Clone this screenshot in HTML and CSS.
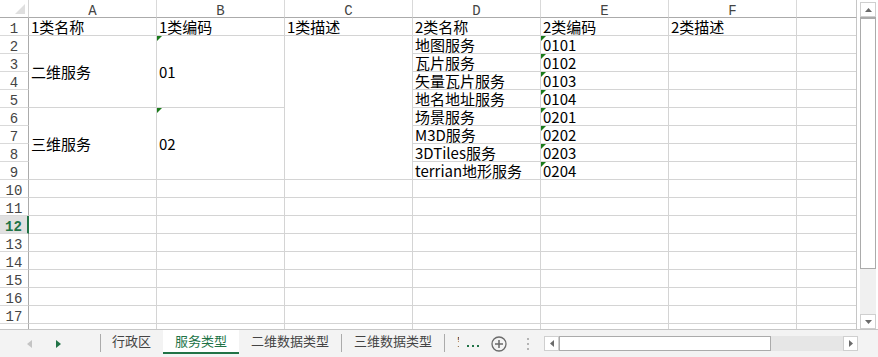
FILE: index.html
```html
<!DOCTYPE html>
<html lang="zh-CN">
<head>
    <meta charset="UTF-8">
    <title>服务类型</title>
    <link rel="stylesheet" href="styles.css">
</head>
<body>

<div class="book">
    <div class="work">
        <div class="sheet">
            <div class="corner"></div>

            <div class="colheads">
                <div class="colhead">A</div>
                <div class="colhead">B</div>
                <div class="colhead">C</div>
                <div class="colhead">D</div>
                <div class="colhead">E</div>
                <div class="colhead">F</div>
                <div class="colhead last"></div>
            </div>

            <div class="rowheads">
                <div class="rowhead">1</div>
                <div class="rowhead">2</div>
                <div class="rowhead">3</div>
                <div class="rowhead">4</div>
                <div class="rowhead">5</div>
                <div class="rowhead">6</div>
                <div class="rowhead">7</div>
                <div class="rowhead">8</div>
                <div class="rowhead">9</div>
                <div class="rowhead">10</div>
                <div class="rowhead">11</div>
                <div class="rowhead active">12</div>
                <div class="rowhead">13</div>
                <div class="rowhead">14</div>
                <div class="rowhead">15</div>
                <div class="rowhead">16</div>
                <div class="rowhead">17</div>
                <div class="rowhead"></div>
            </div>

            <div class="cells">
                <!-- 表头 -->
                <div class="cell">1类名称</div>
                <div class="cell">1类编码</div>
                <div class="cell">1类描述</div>
                <div class="cell">2类名称</div>
                <div class="cell">2类编码</div>
                <div class="cell">2类描述</div>
                <div class="cell"></div>

                <!-- 二维 -->
                <div class="cell merged span4">二维服务</div>
                <div class="cell merged span4 flag">01</div>
                <div class="cell merged span8"></div>
                <div class="cell">地图服务</div>
                <div class="cell flag">0101</div>
                <div class="cell"></div>
                <div class="cell"></div>

                <div class="cell">瓦片服务</div>
                <div class="cell flag">0102</div>
                <div class="cell"></div>
                <div class="cell"></div>

                <div class="cell">矢量瓦片服务</div>
                <div class="cell flag">0103</div>
                <div class="cell"></div>
                <div class="cell"></div>

                <div class="cell">地名地址服务</div>
                <div class="cell flag">0104</div>
                <div class="cell"></div>
                <div class="cell"></div>

                <!-- 三维 -->
                <div class="cell merged span4">三维服务</div>
                <div class="cell merged span4 flag">02</div>
                <div class="cell">场景服务</div>
                <div class="cell flag">0201</div>
                <div class="cell"></div>
                <div class="cell"></div>

                <div class="cell">M3D服务</div>
                <div class="cell flag">0202</div>
                <div class="cell"></div>
                <div class="cell"></div>

                <div class="cell">3DTiles服务</div>
                <div class="cell flag">0203</div>
                <div class="cell"></div>
                <div class="cell"></div>

                <div class="cell">terrian地形服务</div>
                <div class="cell flag">0204</div>
                <div class="cell"></div>
                <div class="cell"></div>
            </div>
        </div>

        <div class="vscroll">
            <div class="sbtn">
                <svg width="7" height="4" viewBox="0 0 7 4"><polygon points="0,4 7,4 3.5,0" fill="#6b6b6b"/></svg>
            </div>
            <div class="vthumb"></div>
            <div class="vtrack"></div>
            <div class="sbtn">
                <svg width="7" height="4" viewBox="0 0 7 4"><polygon points="0,0 7,0 3.5,4" fill="#6b6b6b"/></svg>
            </div>
        </div>
    </div>

    <div class="tabbar">
        <div class="tabnav">
            <svg width="5" height="8" viewBox="0 0 5 8"><polygon points="5,0 5,8 0,4" fill="#c4c4c4"/></svg>
            <svg class="next" width="5" height="8" viewBox="0 0 5 8"><polygon points="0,0 0,8 5,4" fill="#217346"/></svg>
        </div>

        <div class="tabs">
            <div class="sep"></div>
            <div class="tab first">行政区</div>
            <div class="tab active">服务类型</div>
            <div class="tab">二维数据类型</div>
            <div class="sep"></div>
            <div class="tab">三维数据类型</div>
            <div class="sep"></div>
            <div class="tab">空间数据</div>
        </div>

        <svg class="more" width="12" height="2" viewBox="0 0 12 2">
            <rect x="0" y="0" width="2" height="2" fill="#217346"/>
            <rect x="5" y="0" width="2" height="2" fill="#217346"/>
            <rect x="10" y="0" width="2" height="2" fill="#217346"/>
        </svg>

        <svg class="add" width="16" height="16" viewBox="0 0 16 16">
            <circle cx="8" cy="8" r="7" fill="none" stroke="#6a6a6a" stroke-width="1.3"/>
            <path d="M8 4v8M4 8h8" stroke="#6a6a6a" stroke-width="1.5"/>
        </svg>

        <svg class="grip" width="2" height="12" viewBox="0 0 2 12">
            <rect x="0" y="0" width="2" height="2" fill="#b4b4b4"/>
            <rect x="0" y="5" width="2" height="2" fill="#b4b4b4"/>
            <rect x="0" y="10" width="2" height="2" fill="#b4b4b4"/>
        </svg>

        <div class="hscroll">
            <div class="sbtn">
                <svg width="4" height="7" viewBox="0 0 4 7"><polygon points="4,0 4,7 0,3.5" fill="#6b6b6b"/></svg>
            </div>
            <div class="hthumb"></div>
            <div class="htrack"></div>
            <div class="sbtn">
                <svg width="4" height="7" viewBox="0 0 4 7"><polygon points="0,0 0,7 4,3.5" fill="#6b6b6b"/></svg>
            </div>
        </div>
    </div>
</div>

</body>
</html>
```

FILE: styles.css
```css
/* إعدادات عامة */
body {
    margin: 0;
    padding: 0;
    background: #fff;
    font-family: "Noto Sans CJK SC", "Noto Sans", sans-serif;
    color: #000;
}

.book {
    width: 878px;
    height: 357px;
    overflow: hidden;
}

/* منطقة الورقة */
.work {
    display: flex;
    height: 329px;
    background: #fff;
}

.sheet {
    display: grid;
    grid-template-columns: 29px 828px;
    grid-template-rows: 18px 324px;
    height: 329px;
    overflow: hidden;
}

.corner {
    position: relative;
    box-sizing: border-box;
    border-right: 1px solid #d4d4d4;
    border-bottom: 1px solid #ababab;
}

.corner::after {
    content: "";
    position: absolute;
    right: 3px;
    bottom: 3px;
    width: 10px;
    height: 10px;
    background: #dfdfdf;
    clip-path: polygon(100% 0, 100% 100%, 0 100%);
}

/* رؤوس الأعمدة */
.colheads {
    display: flex;
}

.colhead {
    box-sizing: border-box;
    width: 128px;
    height: 18px;
    padding-top: 4px;
    line-height: 14px;
    border-right: 1px solid #d9d9d9;
    border-bottom: 1px solid #ababab;
    text-align: center;
    font-family: "Liberation Mono", monospace;
    font-size: 14px;
    color: #444;
}

.colhead.last {
    width: 60px;
    border-right-color: #c6c6c6;
}

/* أرقام الصفوف */
.rowhead {
    box-sizing: border-box;
    height: 18px;
    padding-top: 4px;
    line-height: 14px;
    border-right: 1px solid #ababab;
    border-bottom: 1px solid #d9d9d9;
    text-align: center;
    font-family: "Liberation Mono", monospace;
    font-size: 14px;
    color: #444;
}

.rowhead.active {
    background: #e1e1e1;
    color: #217346;
    font-weight: bold;
    border-right: 2px solid #217346;
}

/* الخلايا: الخطوط مرسومة كخلفية */
.cells {
    display: grid;
    grid-template-columns: repeat(6, 128px) 60px;
    grid-template-rows: repeat(18, 18px);
    background-color: #fff;
    background-image:
        linear-gradient(to left, #c6c6c6 1px, transparent 1px),
        linear-gradient(to right, transparent 127px, #d4d4d4 127px),
        linear-gradient(to bottom, transparent 17px, #d4d4d4 17px);
    background-size: 100% 100%, 128px 100%, 100% 18px;
    background-repeat: no-repeat, repeat, repeat;
}

.cell {
    position: relative;
    box-sizing: border-box;
    padding-left: 2px;
    line-height: 17px;
    font-size: 15px;
    white-space: nowrap;
}

/* الخلايا المدمجة تغطي الخطوط الداخلية */
.merged {
    display: flex;
    align-items: center;
    background: #fff;
    border-right: 1px solid #d4d4d4;
    border-bottom: 1px solid #d4d4d4;
}

.span4 {
    grid-row: span 4;
}

.span8 {
    grid-row: span 8;
}

/* مثلث التنبيه الأخضر */
.flag::before {
    content: "";
    position: absolute;
    left: 0;
    top: 0;
    border-top: 5px solid #1a7a1a;
    border-right: 5px solid transparent;
}

/* شريط التمرير العمودي */
.vscroll {
    display: flex;
    flex-direction: column;
    width: 16px;
    height: 327px;
    margin: 2px 0 0 3px;
}

.sbtn {
    display: flex;
    align-items: center;
    justify-content: center;
    box-sizing: border-box;
    width: 16px;
    height: 15px;
    background: #fff;
    border: 1px solid #cfcfcf;
}

.vthumb {
    box-sizing: border-box;
    height: 252px;
    background: #fff;
    border: 1px solid #ababab;
    border-top-width: 2px;
}

.vtrack {
    flex: 1;
    background: #f0f0f0;
}

/* شريط الأوراق */
.tabbar {
    display: flex;
    align-items: center;
    box-sizing: border-box;
    height: 28px;
    background: #f3f3f3;
    border-top: 1px solid #c6c6c6;
}

.tabnav {
    display: flex;
    align-items: center;
    width: 100px;
    padding-left: 27px;
    box-sizing: border-box;
}

.tabnav .next {
    margin-left: 24px;
}

.tabs {
    display: flex;
    align-items: flex-start;
    align-self: stretch;
    width: 359px;
    overflow: hidden;
}

.sep {
    flex: none;
    width: 1px;
    height: 18px;
    margin-top: 4px;
    background: #ababab;
}

.tab {
    flex: none;
    box-sizing: border-box;
    height: 24px;
    padding: 0 12px;
    line-height: 22px;
    font-size: 13px;
    color: #444;
    white-space: nowrap;
}

.tab.first {
    padding-left: 11px;
}

.tab.active {
    background: #fff;
    color: #217346;
    border-bottom: 2px solid #217346;
}

.more {
    margin: 5px 0 0 8px;
}

.add {
    margin-left: 12px;
}

.grip {
    margin-left: 20px;
}

/* شريط التمرير الأفقي */
.hscroll {
    display: flex;
    width: 314px;
    height: 15px;
    margin-left: 15px;
}

.hscroll .sbtn {
    width: 15px;
}

.hthumb {
    box-sizing: border-box;
    width: 212px;
    background: #fff;
    border: 1px solid #ababab;
}

.htrack {
    flex: 1;
    background: #e6e6e6;
}
```
